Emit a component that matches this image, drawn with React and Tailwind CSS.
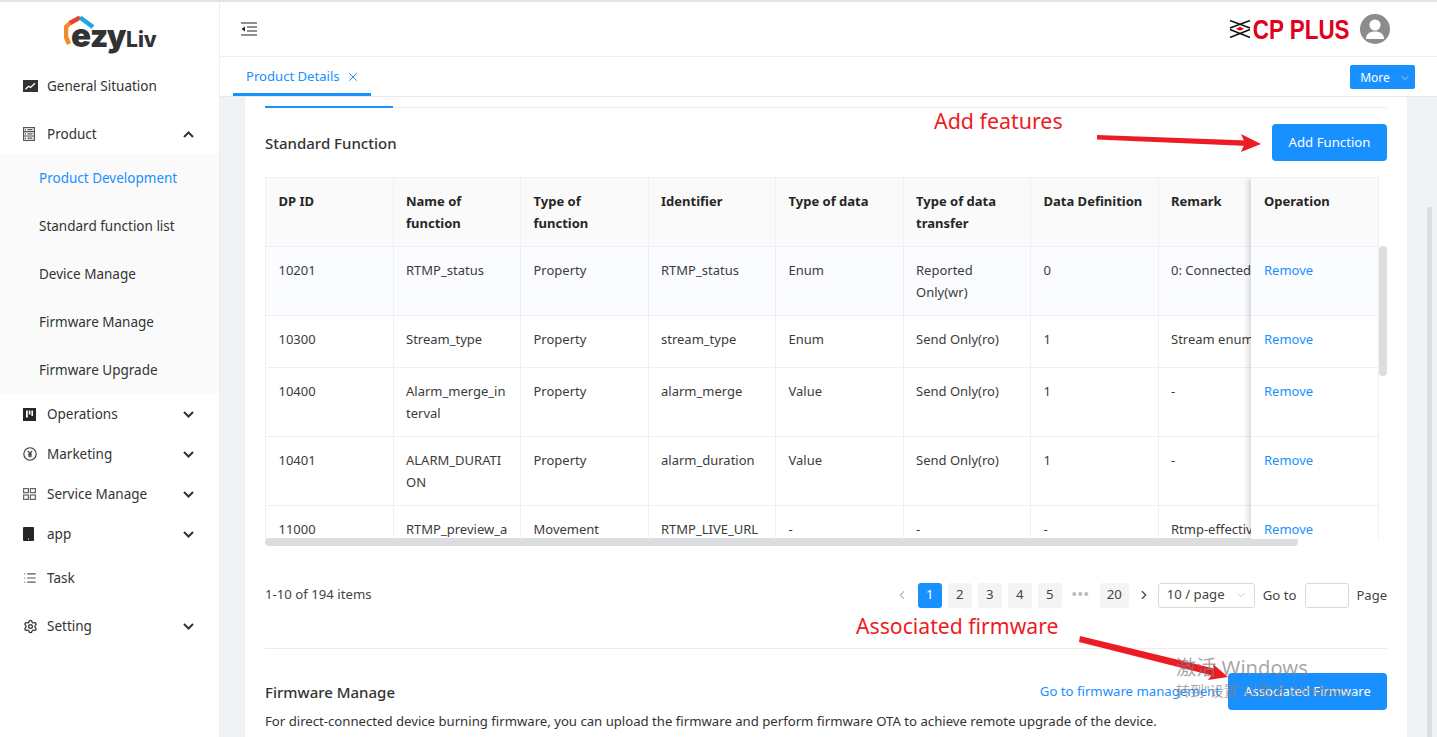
import React from 'react';
import { ChevronDown, ChevronLeft, ChevronRight, X, Settings, List } from 'lucide-react';

// Sidebar icons drawn to match the screenshot
const ChartIcon = () => (
  <svg width="15" height="12" viewBox="0 0 15 12">
    <rect width="15" height="12" fill="#333" />
    <path d="M2.5 9.2l3-3 2 1.2 4.5-4.2" fill="none" stroke="#fff" strokeWidth="1.3" />
  </svg>
);
const ProfileIcon = () => (
  <svg width="12" height="14" viewBox="0 0 12 14" fill="none" stroke="#555" strokeWidth="1.2">
    <rect x="0.6" y="0.6" width="10.8" height="12.8" />
    <path d="M0.6 4.7h10.8M0.6 9h10.8M4.5 2.6h5M4.5 6.8h5M4.5 11.2h5" />
    <path d="M2 2.6h1M2 6.8h1M2 11.2h1" strokeWidth="1.4" />
  </svg>
);
const ProjectIcon = () => (
  <svg width="13" height="13" viewBox="0 0 13 13">
    <rect width="13" height="13" fill="#262626" />
    <path d="M3 2.5h1.8v7H3zM5.8 2.5h1.6v4H5.8zM8.4 2.5H10v5.5H8.4z" fill="#fff" />
  </svg>
);
const YenIcon = () => (
  <svg width="14" height="14" viewBox="0 0 14 14" fill="none" stroke="#333" strokeWidth="1.1">
    <circle cx="7" cy="7" r="6.2" />
    <path d="M4.8 3.8L7 6.6l2.2-2.8M7 6.6v4M5 7.2h4M5 9h4" />
  </svg>
);
const GridIcon = () => (
  <svg width="13" height="12" viewBox="0 0 13 12" fill="none" stroke="#666" strokeWidth="1.2">
    <rect x="0.6" y="0.6" width="4.8" height="4" />
    <rect x="7.4" y="0.6" width="5" height="4" />
    <rect x="0.6" y="7" width="4.8" height="4.4" />
    <rect x="7.4" y="7" width="5" height="4.4" />
  </svg>
);
const PhoneIcon = () => (
  <svg width="11" height="14" viewBox="0 0 11 14">
    <rect width="11" height="14" rx="1" fill="#262626" />
    <rect x="5" y="11.5" width="1" height="1" fill="#fff" />
  </svg>
);
const Chevron = ({ up }) => (
  <svg width="11" height="7" viewBox="0 0 11 7" fill="none" stroke="#333" strokeWidth="2" className={up ? '' : 'rotate-180'}>
    <path d="M1 6l4.5-4.5L10 6" />
  </svg>
);

const EzyLivLogo = () => (
  <div className="relative h-[64px] pl-[71px] pt-[15px] flex items-baseline text-[#333] font-['Inter',sans-serif]">
    <svg className="absolute left-[64px] top-[14px]" width="32" height="30" viewBox="0 0 32 30" fill="none">
      <path d="M5 28L2 21V11L7 6" stroke="#f58a2c" strokeWidth="4.5" />
      <path d="M6 7L16 1.5" stroke="#e8412f" strokeWidth="4.5" />
      <path d="M16 1.5L29 11" stroke="#1ea7e1" strokeWidth="4.5" />
    </svg>
    <span className="text-[33px] leading-[36px] font-black">e</span>
    <span className="text-[31px] leading-[36px] font-black tracking-[-1.5px] -ml-[1px]">zy</span>
    <span className="text-[21px] leading-[36px] font-extrabold ml-[1px]">Liv</span>
  </div>
);

const CpPlusLogo = () => (
  <div className="flex items-center">
    <svg width="22" height="18" viewBox="0 0 22 18" fill="none" stroke="#111" strokeWidth="1.5">
      <path d="M1 0.5L21 8M21 0.5L1 8M1 17.5L21 9.5M21 17.5L1 9.5" />
      <path d="M7 8.7l4-2 4 2-4 2z" fill="#e2001a" stroke="none" />
    </svg>
    <span className="-ml-[18px] mt-[2px] scale-x-[0.83] origin-right text-[27px] leading-none font-bold text-[#e2001a] font-['Liberation_Sans',sans-serif]">CP PLUS</span>
  </div>
);

const Avatar = () => (
  <svg width="30" height="30" viewBox="0 0 30 30">
    <circle cx="15" cy="15" r="15" fill="#8c8c8c" />
    <circle cx="15" cy="11" r="5.6" fill="#fff" />
    <path d="M6 25c0-5 3.5-7.5 9-7.5s9 2.5 9 7.5z" fill="#fff" />
  </svg>
);

const NavItem = ({ icon, label, open, arrow = true, className = '' }) => (
  <div className={`flex items-center h-10 pl-[23px] pr-[25px] text-[#333] ${className}`}>
    <span className="w-[24px] flex items-center">{icon}</span>
    <span className="flex-1">{label}</span>
    {arrow && <Chevron up={open} />}
  </div>
);

const Sidebar = () => (
  <aside className="w-[220px] shrink-0 bg-white border-r border-[#eceef2] text-[13.5px]">
    <EzyLivLogo />
    <NavItem icon={<ChartIcon />} label="General Situation" arrow={false} />
    <NavItem icon={<ProfileIcon />} label="Product" open className="mt-2" />
    <div className="bg-[#fafafa]">
      <div className="h-12 pl-[39px] flex items-center text-[#1890ff]">Product Development</div>
      {['Standard function list', 'Device Manage', 'Firmware Manage', 'Firmware Upgrade'].map((s) => (
        <div key={s} className="h-12 pl-[39px] flex items-center text-[#333]">{s}</div>
      ))}
    </div>
    <NavItem icon={<ProjectIcon />} label="Operations" />
    <NavItem icon={<YenIcon />} label="Marketing" />
    <NavItem icon={<GridIcon />} label="Service Manage" />
    <NavItem icon={<PhoneIcon />} label="app" />
    <NavItem icon={<List size={14} className="text-[#555]" />} label="Task" arrow={false} className="mt-1" />
    <NavItem icon={<Settings size={15} className="text-[#333]" />} label="Setting" className="mt-2" />
  </aside>
);

const COLUMNS = ['DP ID', 'Name of function', 'Type of function', 'Identifier', 'Type of data', 'Type of data transfer', 'Data Definition', 'Remark'];

const ROWS = [
  { h: 'h-[69px]', bg: 'bg-[#fbfcff]', cells: ['10201', 'RTMP_status', 'Property', 'RTMP_status', 'Enum', 'Reported Only(wr)', '0', '0: Connected, 1: Disconnected'] },
  { h: 'h-[52px]', bg: '', cells: ['10300', 'Stream_type', 'Property', 'stream_type', 'Enum', 'Send Only(ro)', '1', 'Stream enum values'] },
  { h: 'h-[69px]', bg: '', cells: ['10400', 'Alarm_merge_interval', 'Property', 'alarm_merge', 'Value', 'Send Only(ro)', '1', '-'] },
  { h: 'h-[69px]', bg: '', cells: ['10401', 'ALARM_DURATION', 'Property', 'alarm_duration', 'Value', 'Send Only(ro)', '1', '-'] },
  { h: 'h-[69px]', bg: '', cells: ['11000', 'RTMP_preview_address', 'Movement', 'RTMP_LIVE_URL', '-', '-', '-', 'Rtmp-effective address'] },
];

const Cell = ({ children, last, className = '' }) => (
  <div className={`w-[127.5px] shrink-0 border-r border-[#f0f0f0] pl-[12.5px] pt-[12px] leading-[22px] ${last ? 'whitespace-nowrap pr-0' : 'pr-[12px]'} ${className}`}>
    {children}
  </div>
);

const ProductTable = () => (
  <div className="flex text-[13px]">
    <div className="w-[1114px] h-[362px] overflow-hidden border-t border-l border-[#f0f0f0] flex">
      {/* scrolling columns */}
      <div className="w-[986px] overflow-hidden">
        <div className="w-[1100px] flex h-[69px] bg-[#fafafa] font-bold text-[#262626] border-b border-[#f0f0f0]">
          {COLUMNS.map((c) => <Cell key={c}>{c}</Cell>)}
        </div>
        {ROWS.map((r) => (
          <div key={r.cells[0]} className={`w-[1100px] flex ${r.h} ${r.bg} border-b border-[#f0f0f0] text-[#3b3b3b]`}>
            {r.cells.map((c, i) => (
              <Cell key={i} last={i === 7} className={i === 1 ? 'break-all' : ''}>{c}</Cell>
            ))}
          </div>
        ))}
      </div>
      {/* fixed Operation column */}
      <div className="w-[128px] shrink-0 border-r border-[#f0f0f0] shadow-[-4px_0_5px_-1px_rgba(0,0,0,0.14)] relative bg-white">
        <div className="h-[69px] bg-[#fafafa] font-bold text-[#262626] border-b border-[#f0f0f0] pl-[13px] pt-[12px] leading-[22px]">Operation</div>
        {ROWS.map((r) => (
          <div key={r.cells[0]} className={`${r.h} ${r.bg} border-b border-[#f0f0f0] pl-[13px] pt-[12px] leading-[22px] text-[#1890ff]`}>Remove</div>
        ))}
      </div>
    </div>
    <div className="w-2 shrink-0 pt-[69px]">
      <div className="h-[130px] rounded-[4px] bg-[#dcddde]" />
    </div>
  </div>
);

const PageBox = ({ children, active, className = '' }) => (
  <span className={`h-[25px] min-w-6 px-[5px] rounded-[3px] flex items-center justify-center ${active ? 'bg-[#1890ff] text-white' : 'bg-[#f4f4f5] text-[#444]'} ${className}`}>
    {children}
  </span>
);

const Pagination = () => (
  <div className="flex items-center justify-between h-[26px] text-[13.2px] text-[#444]">
    <span>1-10 of 194 items</span>
    <div className="flex items-center">
      <ChevronLeft size={14} className="text-[#bbb] mr-[9px]" />
      <div className="flex items-center gap-[6px]">
        <PageBox active>1</PageBox>
        <PageBox>2</PageBox>
        <PageBox>3</PageBox>
        <PageBox>4</PageBox>
        <PageBox>5</PageBox>
      </div>
      <span className="w-[38px] text-center text-[#bbb] tracking-[1px] font-bold leading-none">•••</span>
      <PageBox className="w-[29px]">20</PageBox>
      <ChevronRight size={14} className="text-[#444] ml-[8px] mr-[7px]" />
      <div className="w-[97px] h-[25px] border border-[#d9d9d9] rounded-[3px] flex items-center justify-between pl-2 pr-[6px]">
        <span>10 / page</span>
        <ChevronDown size={14} strokeWidth={1.2} className="text-[#bbb]" />
      </div>
      <span className="ml-[8px] pt-[2px]">Go to</span>
      <div className="w-[44px] h-[25px] border border-[#d9d9d9] rounded-[3px] ml-[8px]" />
      <span className="ml-[8px] pt-[2px] text-[13px]">Page</span>
    </div>
  </div>
);

const Annotations = () => (
  <>
    <span className="absolute left-[934px] top-[104px] text-[21.4px] leading-[30px] text-[#ed1c24] whitespace-nowrap">Add features</span>
    <span className="absolute left-[856px] top-[609px] text-[21.2px] leading-[30px] text-[#ed1c24] whitespace-nowrap">Associated firmware</span>
    <svg className="absolute left-0 top-0 pointer-events-none" width="1437" height="737" fill="none">
      <path d="M1097 133L1248 138.5L1248 144L1097 137.5z" fill="#ed1c24" />
      <path d="M1241 132L1261 142L1241 150L1245 141z" fill="#ed1c24" />
      <path d="M1080 634L1216 667L1214 674L1079 640z" fill="#ed1c24" />
      <path d="M1213 662L1228 675L1208 678L1214 670z" fill="#ed1c24" />
    </svg>
    {/* Windows activation watermark */}
    <div className="absolute left-[1176px] top-[652px] text-[#808080]/70 whitespace-nowrap pointer-events-none font-['Noto_Sans','Noto_Sans_CJK_SC',sans-serif]">
      <div className="text-[20.2px] leading-[26px]">激活 Windows</div>
      <div className="text-[14px] leading-[20px] mt-[1px]">转到"设置"以激活 Windows。</div>
    </div>
  </>
);

export default function App() {
  return (
    <div className="relative h-[737px] w-[1437px] overflow-hidden flex border-t-2 border-[#e4e4e4] bg-white font-['Noto_Sans','Noto_Sans_CJK_SC',sans-serif] text-[13px]">
      <Sidebar />
      <div className="flex-1 min-w-0 flex flex-col">
        <header className="h-[55px] shrink-0 flex items-center justify-between pl-[21px] pr-[47px] border-b border-[#f0f0f0]">
          <svg width="16" height="14" viewBox="0 0 16 14" fill="none" stroke="#222" strokeWidth="1.2">
            <path d="M0 1h16M6 5h10M6 9h10M0 13h16" />
            <path d="M4 4.5L0.5 7 4 9.5z" fill="#222" stroke="none" />
          </svg>
          <div className="flex items-center gap-[10px]">
            <CpPlusLogo />
            <Avatar />
          </div>
        </header>
        <div className="h-[40px] shrink-0 flex justify-between items-start pl-[13px] pr-[22px] border-b border-[#e6e8ee]">
          <div className="w-[138px] h-[39px] border-b-[3px] border-[#1890ff] flex items-center gap-[6px] pl-[13px] pt-[3px] text-[#1890ff] text-[13.1px]">
            Product Details <X size={14} strokeWidth={1.7} />
          </div>
          <div className="mt-[8px] w-[65px] h-6 pt-[1px] pl-[6px] rounded-[2px] bg-[#1890ff] text-white text-[12px] flex items-center justify-center gap-[9px]">
            More <ChevronDown size={12} strokeWidth={1.2} />
          </div>
        </div>
        <main className="flex-1 min-h-0 bg-[#f0f2f5] pl-[25px] pr-[5px] flex">
          <div className="w-[1162px] bg-white px-5 overflow-hidden">
            <div className="h-[11px] border-b border-[#ececec] relative">
              <div className="absolute left-0 bottom-[-1px] w-[128px] h-[2px] bg-[#1890ff]" />
            </div>
            <div className="flex items-center justify-between h-[69px] pb-[1px]">
              <h2 className="text-[15px] font-medium text-[#333] pt-[2px]">Standard Function</h2>
              <button className="w-[115px] h-[37px] pt-[2px] rounded-[4px] bg-[#1890ff] text-white text-[13.2px]">Add Function</button>
            </div>
            <ProductTable />
            <div className="h-[8px] w-[1033px] rounded-[4px] bg-[#dcddde] -mt-[1px]" />
            <div className="mt-[36px]"><Pagination /></div>
            <div className="h-[41px] border-b border-[#ececec]" />
            <div className="flex items-center justify-between mt-[24px]">
              <h2 className="text-[15px] font-medium text-[#333] pt-[2px]">Firmware Manage</h2>
              <div className="flex items-center gap-2">
                <span className="text-[#1890ff] text-[13.2px]">Go to firmware management</span>
                <button className="w-[159px] h-[37px] rounded-[4px] bg-[#1890ff] text-white text-[13px]">Associated Firmware</button>
              </div>
            </div>
            <p className="mt-[2px] text-[13.16px] text-[#333]">For direct-connected device burning firmware, you can upload the firmware and perform firmware OTA to achieve remote upgrade of the device.</p>
          </div>
          <div className="flex-1 pt-[110px] flex justify-end">
            <div className="w-[5px] h-[600px] bg-[#dcddde] rounded-l-[3px]" />
          </div>
        </main>
      </div>
      <Annotations />
    </div>
  );
}
